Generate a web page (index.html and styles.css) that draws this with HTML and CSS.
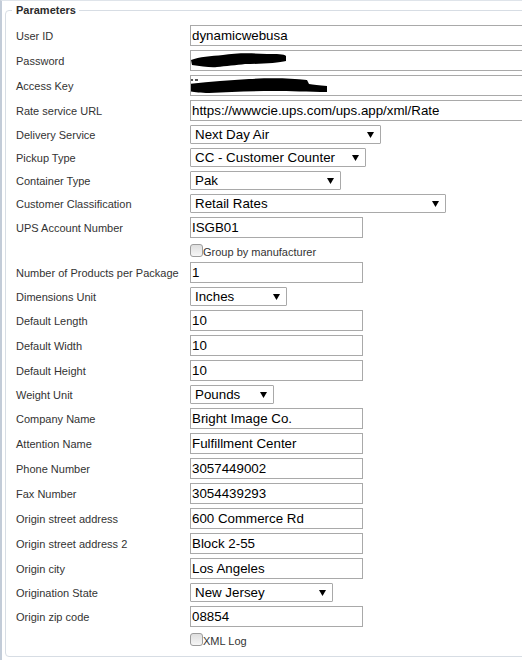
FILE: index.html
```html
<!DOCTYPE html>
<html>
<head>
<meta charset="utf-8">
<link rel="stylesheet" href="styles.css">
</head>
<body>
<div class="page">
  <fieldset class="params">
    <legend>Parameters</legend>
    <div class="form">
      <div class="label">User ID</div>
      <div class="ctl"><input class="field wide" type="text" value="dynamicwebusa"></div>

      <div class="label">Password</div>
      <div class="ctl"><div class="field wide redacted">
        <svg width="110" height="19" viewBox="0 0 110 19"><path d="M2 9 C 10 6, 22 5, 34 4 C 46 2, 62 2, 78 3 C 88 3, 95 3, 97 5 L 97 10 C 90 12, 70 13, 56 13 C 48 14, 36 15, 28 16 C 22 17, 12 15, 3 14 Z" fill="#000"/></svg>
      </div></div>

      <div class="label">Access Key</div>
      <div class="ctl"><div class="field wide redacted">
        <svg width="150" height="19" viewBox="0 0 150 19"><path d="M1 3 h3 v2 h-3 Z M6 3 h3 v2 h-3 Z" fill="#555"/><path d="M0 8 C 20 6, 40 4, 60 3 C 80 2, 100 2, 118 4 L 120 8 C 124 9, 130 9, 138 10 L 138 16 C 120 16, 100 15, 85 15 C 60 15, 40 16, 20 17 C 10 17, 3 16, 0 15 Z" fill="#000"/></svg>
      </div></div>

      <div class="label">Rate service URL</div>
      <div class="ctl"><input class="field wide" type="text" value="https://wwwcie.ups.com/ups.app/xml/Rate"></div>

      <div class="label">Delivery Service</div>
      <div class="ctl"><div class="select w191"><span>Next Day Air</span><svg class="arrow" width="7" height="6" viewBox="0 0 7 6"><path d="M0 0 H7 L3.5 6 Z" fill="#000"/></svg></div></div>

      <div class="label">Pickup Type</div>
      <div class="ctl"><div class="select w176"><span>CC - Customer Counter</span><svg class="arrow" width="7" height="6" viewBox="0 0 7 6"><path d="M0 0 H7 L3.5 6 Z" fill="#000"/></svg></div></div>

      <div class="label">Container Type</div>
      <div class="ctl"><div class="select w151"><span>Pak</span><svg class="arrow" width="7" height="6" viewBox="0 0 7 6"><path d="M0 0 H7 L3.5 6 Z" fill="#000"/></svg></div></div>

      <div class="label">Customer Classification</div>
      <div class="ctl"><div class="select w256"><span>Retail Rates</span><svg class="arrow" width="7" height="6" viewBox="0 0 7 6"><path d="M0 0 H7 L3.5 6 Z" fill="#000"/></svg></div></div>

      <div class="label">UPS Account Number</div>
      <div class="ctl"><input class="field short" type="text" value="ISGB01"></div>

      <div class="label"></div>
      <div class="ctl check"><span class="box"></span><span class="checklabel">Group by manufacturer</span></div>

      <div class="label">Number of Products per Package</div>
      <div class="ctl"><input class="field short" type="text" value="1"></div>

      <div class="label">Dimensions Unit</div>
      <div class="ctl"><div class="select w97"><span>Inches</span><svg class="arrow" width="7" height="6" viewBox="0 0 7 6"><path d="M0 0 H7 L3.5 6 Z" fill="#000"/></svg></div></div>

      <div class="label">Default Length</div>
      <div class="ctl"><input class="field short" type="text" value="10"></div>

      <div class="label">Default Width</div>
      <div class="ctl"><input class="field short" type="text" value="10"></div>

      <div class="label">Default Height</div>
      <div class="ctl"><input class="field short" type="text" value="10"></div>

      <div class="label">Weight Unit</div>
      <div class="ctl"><div class="select w84"><span>Pounds</span><svg class="arrow" width="7" height="6" viewBox="0 0 7 6"><path d="M0 0 H7 L3.5 6 Z" fill="#000"/></svg></div></div>

      <div class="label">Company Name</div>
      <div class="ctl"><input class="field short" type="text" value="Bright Image Co."></div>

      <div class="label">Attention Name</div>
      <div class="ctl"><input class="field short" type="text" value="Fulfillment Center"></div>

      <div class="label">Phone Number</div>
      <div class="ctl"><input class="field short" type="text" value="3057449002"></div>

      <div class="label">Fax Number</div>
      <div class="ctl"><input class="field short" type="text" value="3054439293"></div>

      <div class="label">Origin street address</div>
      <div class="ctl"><input class="field short" type="text" value="600 Commerce Rd"></div>

      <div class="label">Origin street address 2</div>
      <div class="ctl"><input class="field short" type="text" value="Block 2-55"></div>

      <div class="label">Origin city</div>
      <div class="ctl"><input class="field short" type="text" value="Los Angeles"></div>

      <div class="label">Origination State</div>
      <div class="ctl"><div class="select w143"><span>New Jersey</span><svg class="arrow" width="7" height="6" viewBox="0 0 7 6"><path d="M0 0 H7 L3.5 6 Z" fill="#000"/></svg></div></div>

      <div class="label">Origin zip code</div>
      <div class="ctl"><input class="field short" type="text" value="08854"></div>

      <div class="label"></div>
      <div class="ctl check"><span class="box"></span><span class="checklabel">XML Log</span></div>
    </div>
  </fieldset>
</div>
</body>
</html>
```

FILE: styles.css
```css
html, body {
  margin: 0;
  padding: 0;
  background: #fff;
}
body {
  font-family: "Liberation Sans", Arial, sans-serif;
}
.page {
  width: 522px;
  height: 660px;
  overflow: hidden;
  border-top: 1px solid #dfe4ea;
  border-left: 2px solid #c3ccd8;
  box-sizing: border-box;
  padding: 0 0 0 3px;
}
.params {
  margin: 3px 0 0 0;
  width: 580px;
  box-sizing: border-box;
  border: 1px solid #d7dde4;
  border-radius: 4px;
  padding: 8px 0 9px 6px;
}
.params legend {
  font-size: 11px;
  font-weight: bold;
  line-height: 13px;
  color: #2b2b2b;
  padding: 0 3px 0 4px;
}
.form {
  display: grid;
  grid-template-columns: 174px 1fr;
  grid-template-rows:
    21px 21px 21px 21px
    19px 19px 19px 19px
    21px 16px 21px 19px
    21px 21px 21px 19px
    21px 21px 21px 21px 21px 21px 21px
    19px 21px 16px;
  row-gap: 4px;
  padding-left: 4px;
}
.label {
  font-size: 11px;
  color: #333;
  display: flex;
  align-items: center;
  white-space: nowrap;
}
.ctl {
  display: flex;
  align-items: center;
}
.field {
  box-sizing: border-box;
  height: 21px;
  border: 1px solid #a9a9a9;
  padding: 0 1px;
  margin: 0;
  font-family: "Liberation Sans", Arial, sans-serif;
  font-size: 13.33px;
  color: #000;
  background: #fff;
  outline: none;
}
.wide { width: 380px; }
.short { width: 173px; }
.redacted {
  display: flex;
  align-items: center;
  padding: 0;
  overflow: hidden;
}
.redacted svg { display: block; margin-left: -2px; }
.select {
  box-sizing: border-box;
  height: 19px;
  border: 1px solid #a9a9a9;
  border-radius: 1px;
  padding: 0 6px 0 4px;
  display: flex;
  align-items: center;
  justify-content: space-between;
  font-size: 13.33px;
  color: #000;
  background: #fff;
}
.arrow { display: block; }
.w191 { width: 191px; }
.w176 { width: 176px; }
.w151 { width: 151px; }
.w256 { width: 256px; }
.w97 { width: 97px; }
.w84 { width: 84px; }
.w143 { width: 143px; }
.box {
  box-sizing: border-box;
  width: 13px;
  height: 13px;
  border: 1px solid #9c9c9c;
  border-radius: 3px;
  background: linear-gradient(#dedede, #f6f6f6);
}
.checklabel {
  font-size: 11px;
  color: #333;
  padding-top: 3px;
}
```
